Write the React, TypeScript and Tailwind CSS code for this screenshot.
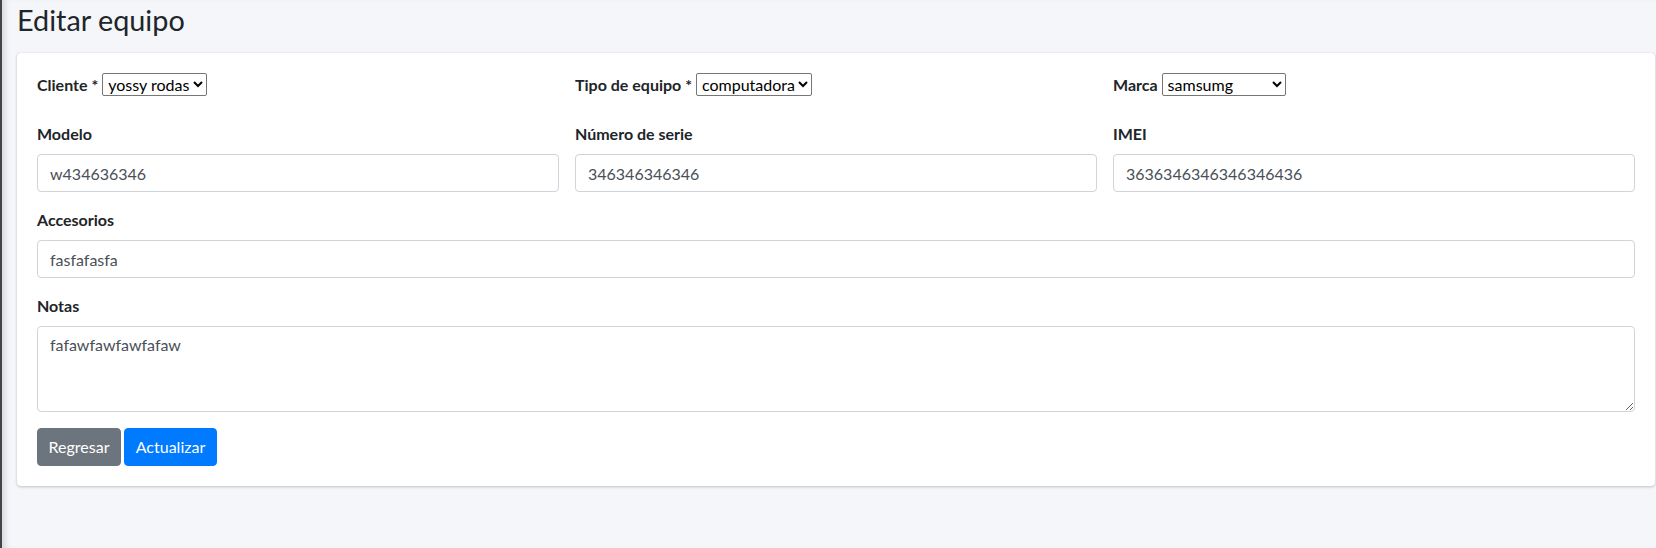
import React from "react";

const labelCls = "block font-bold text-[16px] leading-6 text-[#212529] mb-2";
const inputCls =
  "block w-full h-[38px] border border-[#ced4da] rounded-[4px] px-3 text-[16px] leading-6 text-[#495057] bg-white outline-none";

function Field({ label, value }: { label: string; value: string }) {
  return (
    <div className="mb-4">
      <label className={labelCls}>{label}</label>
      <input className={inputCls} defaultValue={value} />
    </div>
  );
}

function InlineSelect({
  label,
  value,
  options,
  widthCls,
}: {
  label: string;
  value: string;
  options: string[];
  widthCls: string;
}) {
  return (
    <div className="flex items-center h-[23px] mb-[26px]">
      <label className="font-bold text-[16px] leading-6 text-[#212529] mr-[4px] whitespace-nowrap">{label}</label>
      <select
        className={`h-[23px] ${widthCls} border border-[#767676] rounded-[2px] bg-white text-black text-[16px] leading-5 pl-[1px]`}
        defaultValue={value}
      >
        {options.map((o) => (
          <option key={o} value={o}>
            {o}
          </option>
        ))}
      </select>
    </div>
  );
}

export default function App() {
  return (
    <div className="min-h-screen bg-[#f4f6f9] flex font-['Lato',sans-serif] text-[#212529]">
      <div className="w-[2px] shrink-0 bg-[#3f444a]" />
      <div className="flex-1 min-w-0 shadow-[inset_7px_0_6px_-4px_rgba(0,0,0,0.13)] pl-[15px] pr-[1px]">
        <h1 className="text-[28.8px] leading-[1.2] font-normal text-[#212529] pt-[3px] h-[53px]">Editar equipo</h1>
        <div className="bg-white rounded-[4px] shadow-[0_0_1px_rgba(0,0,0,0.125),0_1px_3px_rgba(0,0,0,0.2)] p-5">
          <div className="grid grid-cols-3 gap-x-4">
            <InlineSelect label="Cliente *" value="yossy rodas" options={["yossy rodas"]} widthCls="w-auto" />
            <InlineSelect label="Tipo de equipo *" value="computadora" options={["computadora"]} widthCls="w-auto" />
            <InlineSelect label="Marca" value="samsumg" options={["samsumg"]} widthCls="w-[124px]" />
          </div>
          <div className="grid grid-cols-3 gap-x-4">
            <Field label="Modelo" value="w434636346" />
            <Field label="Número de serie" value="346346346346" />
            <Field label="IMEI" value="3636346346346346436" />
          </div>
          <Field label="Accesorios" value="fasfafasfa" />
          <div className="mb-4">
            <label className={labelCls}>Notas</label>
            <textarea
              className="block w-full h-[86px] border border-[#ced4da] rounded-[4px] px-3 py-[6px] text-[16px] leading-6 text-[#495057] bg-white outline-none"
              defaultValue="fafawfawfawfafaw"
            />
          </div>
          <div className="flex gap-[3px]">
            <button className="h-[38px] w-[84px] rounded-[4px] bg-[#6c757d] border border-[#6c757d] text-white text-[16px] leading-6 text-center">
              Regresar
            </button>
            <button className="h-[38px] w-[93px] rounded-[4px] bg-[#007bff] border border-[#007bff] text-white text-[16px] leading-6 text-center">
              Actualizar
            </button>
          </div>
        </div>
      </div>
    </div>
  );
}
